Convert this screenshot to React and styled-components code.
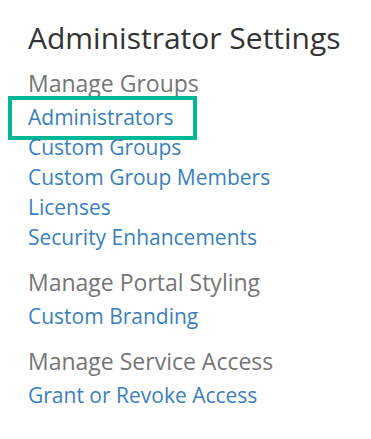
import styled, { createGlobalStyle } from "styled-components";

const GlobalStyle = createGlobalStyle`
  body {
    margin: 0;
    background: #fff;
    font-family: "Open Sans", "Liberation Sans", sans-serif;
  }
`;

const Panel = styled.div`
  padding: 23px 0 0 28px;
`;

const Title = styled.h1`
  margin: 0;
  font-size: 30px;
  line-height: 30px;
  font-weight: 400;
  color: #333;
`;

const Group = styled.section`
  margin-top: 13px;
`;

const Heading = styled.h2`
  margin: 0 0 4px;
  padding-top: 2px;
  font-size: 23px;
  line-height: 30px;
  font-weight: 400;
  color: #767676;
`;

const LinkList = styled.ul`
  margin: 0;
  padding: 0;
  list-style: none;
`;

const Link = styled.a`
  position: relative;
  display: inline-block;
  font-size: 21px;
  line-height: 30px;
  color: #3a7fc1;
  text-decoration: none;

  ${(p) =>
    p.$highlighted &&
    `
    &::after {
      content: "";
      position: absolute;
      left: -20px;
      right: -23px;
      top: -6px;
      bottom: -8px;
      border: 4px solid #00b994;
    }
  `}
`;

const groups = [
  {
    title: "Manage Groups",
    links: [
      { label: "Administrators", highlighted: true },
      { label: "Custom Groups" },
      { label: "Custom Group Members" },
      { label: "Licenses" },
      { label: "Security Enhancements" },
    ],
  },
  { title: "Manage Portal Styling", links: [{ label: "Custom Branding" }] },
  { title: "Manage Service Access", links: [{ label: "Grant or Revoke Access" }] },
];

export default function App() {
  return (
    <>
      <GlobalStyle />
      <Panel>
        <Title>Administrator Settings</Title>
        {groups.map((g) => (
          <Group key={g.title}>
            <Heading>{g.title}</Heading>
            <LinkList>
              {g.links.map((l) => (
                <li key={l.label}>
                  <Link href="#" $highlighted={l.highlighted}>
                    {l.label}
                  </Link>
                </li>
              ))}
            </LinkList>
          </Group>
        ))}
      </Panel>
    </>
  );
}
